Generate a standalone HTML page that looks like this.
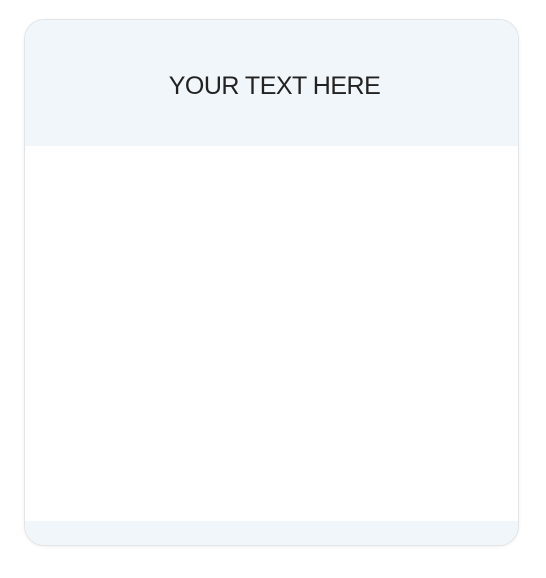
<!DOCTYPE html>
<html><head><style>
html,body{margin:0;padding:0;background:#fff;width:546px;height:578px;overflow:hidden}
.card{position:absolute;left:24px;top:19px;width:493px;height:525px;border:1px solid #e2e4e6;border-radius:20px;overflow:hidden;background:#fff;box-shadow:0 1px 3px rgba(0,0,0,0.06)}
.head{position:absolute;left:0;top:0;right:0;height:126px;background:#f1f6fa}
.head div{position:absolute;left:6px;right:0;top:51px;text-align:center;font:25px/30px "Liberation Sans",sans-serif;color:#222;letter-spacing:-0.5px}
.foot{position:absolute;left:0;right:0;bottom:0;height:24px;background:#f1f6fa}
</style></head><body>
<div class="card"><div class="head"><div>YOUR TEXT HERE</div></div><div class="foot"></div></div>
</body></html>
